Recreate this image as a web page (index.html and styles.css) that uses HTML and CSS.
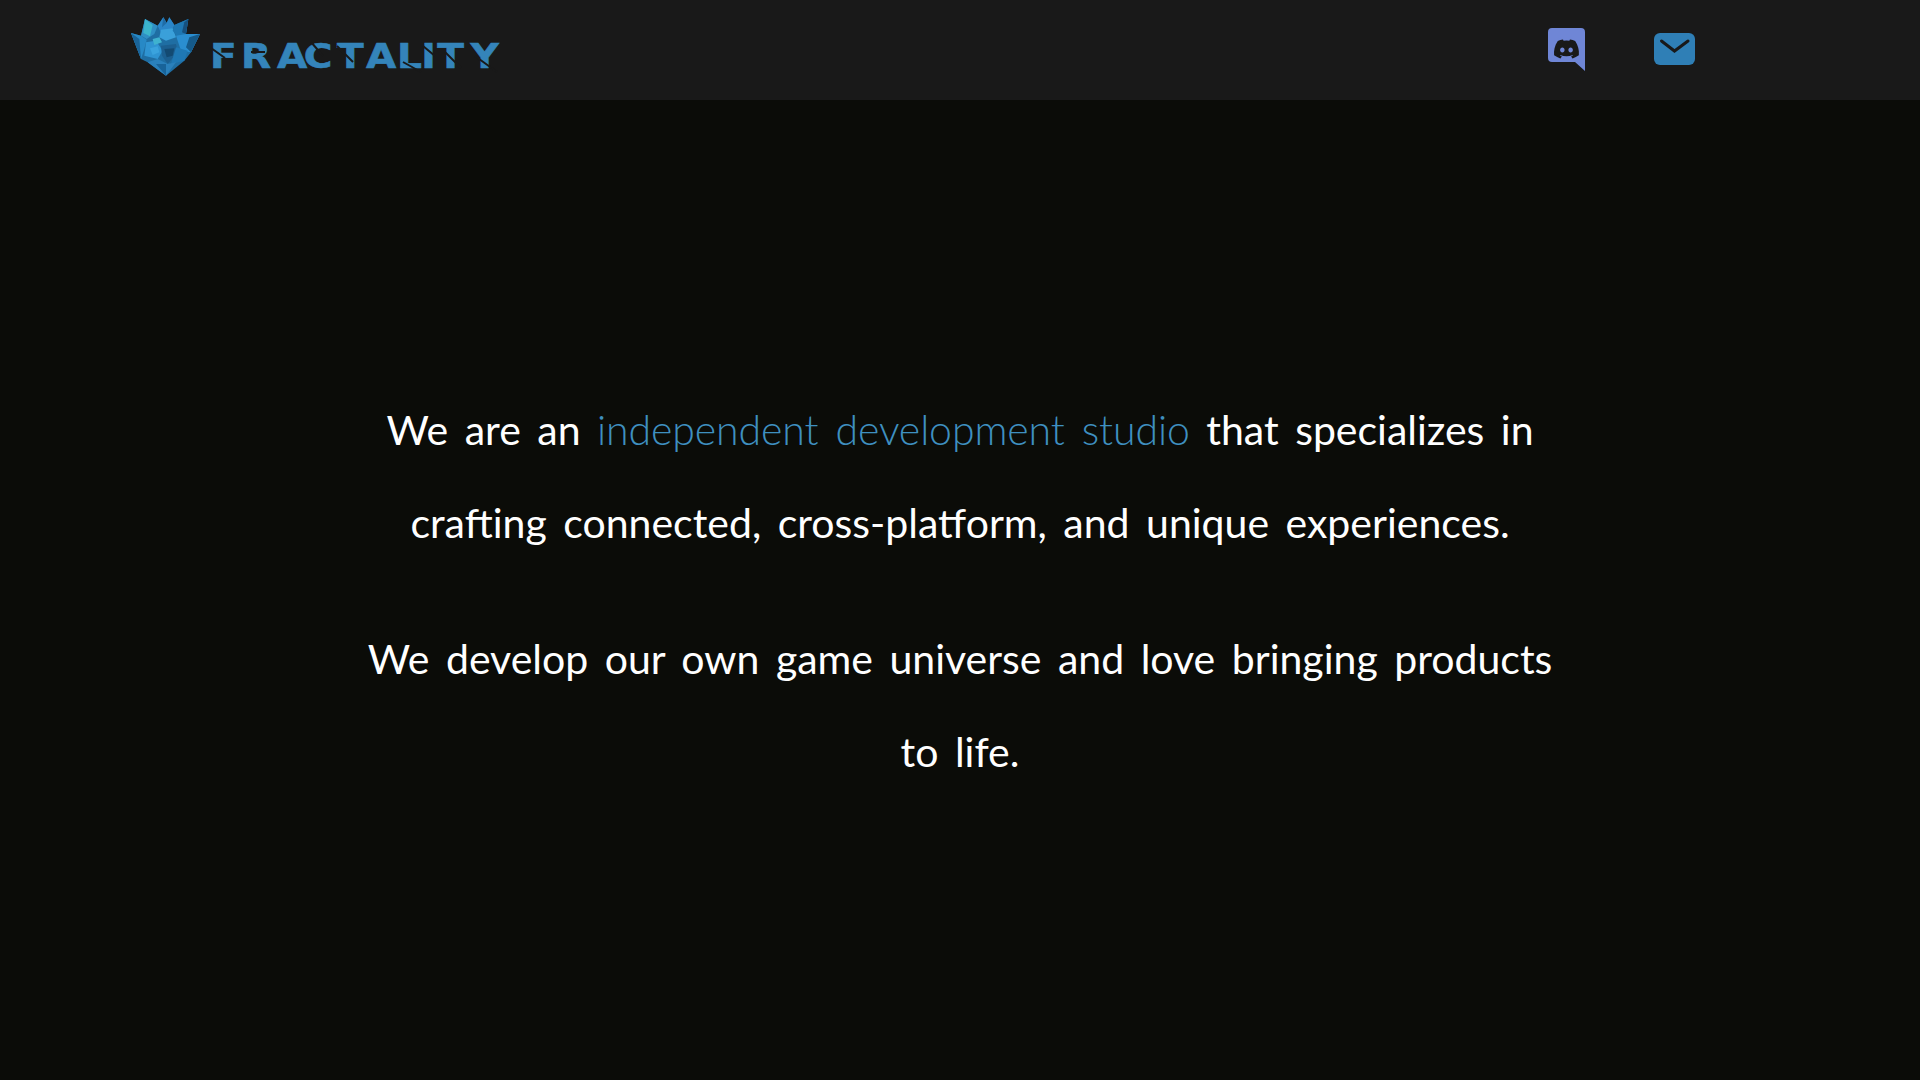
FILE: index.html
```html
<!DOCTYPE html>
<html lang="en">
<head>
<meta charset="utf-8">
<title>Fractality</title>
<link rel="stylesheet" href="styles.css">
</head>
<body>
<header class="topbar">
  <a class="brand" href="#">
    <svg class="crest" viewBox="0 0 255 210" aria-hidden="true">
      <polygon fill="#1f6ea3" points="15,72 45,80 57,30 95,50 112,25 122,42 130,25 145,48 187,30 180,75 222,75 195,130 175,155 120,200 65,160 45,150"/>
      <polygon fill="#2f8fc4" points="57,30 95,50 85,75 62,90 45,80"/>
      <polygon fill="#3bb4cc" points="57,30 80,48 72,82 52,72"/>
      <polygon fill="#2b86c8" points="95,50 112,25 122,42 130,25 145,48 135,68 105,72"/>
      <polygon fill="#1f6ca6" points="112,25 122,42 108,55"/>
      <polygon fill="#3aa0da" points="105,62 140,58 150,85 120,95 100,85"/>
      <polygon fill="#1e77b2" points="145,48 187,30 180,75 160,90 140,65"/>
      <polygon fill="#16507e" points="175,40 187,30 180,75 168,70"/>
      <polygon fill="#2a8ed0" points="150,80 180,75 222,75 195,130 165,125"/>
      <polygon fill="#155a8a" points="190,85 222,75 195,130 180,115"/>
      <polygon fill="#2789c6" points="15,72 45,80 62,92 55,120 45,150"/>
      <polygon fill="#1a6499" points="15,72 40,90 45,150"/>
      <polygon fill="#2f94d2" points="60,100 90,95 110,125 95,150 55,140"/>
      <polygon fill="#3aa3de" points="72,118 95,112 100,130 80,138"/>
      <polygon fill="#1c5f90" points="105,110 150,105 155,130 125,165 108,140"/>
      <polygon fill="#1f78b4" points="150,115 185,125 175,155 135,165"/>
      <polygon fill="#134a72" points="115,120 145,118 140,140 122,145"/>
      <polygon fill="#2a80bb" points="65,160 95,150 125,165 150,160 120,200"/>
      <polygon fill="#186399" points="90,165 120,165 120,200"/>
      <polygon fill="#3fb2cf" points="80,90 100,85 108,100 85,108"/>
    </svg>
    <svg class="wordmark" viewBox="0 0 290 30" role="img" aria-label="FRACTALITY">
      <text class="wordmark-text" transform="scale(1.15 1)" y="26" x="-2.6 24.3 55.7 79 107.8 133 160 181 195 224">FRACTALITY</text>
      <g class="cuts">
        <line x1="-2" y1="6" x2="12" y2="16"/>
        <line x1="38" y1="10" x2="52" y2="10"/>
        <line x1="98" y1="0" x2="110" y2="14"/>
        <line x1="124" y1="4" x2="140" y2="20"/>
        <line x1="190" y1="20" x2="208" y2="30"/>
        <line x1="210" y1="4" x2="222" y2="14"/>
        <line x1="232" y1="10" x2="248" y2="26"/>
        <line x1="262" y1="14" x2="284" y2="30"/>
      </g>
    </svg>
  </a>
  <nav class="socials">
    <a class="social" href="#" aria-label="Discord">
      <svg class="icon-discord" viewBox="0 0 38 44" aria-hidden="true">
        <path class="discord-bubble" d="M4 0H33a4 4 0 0 1 4 4V43L27 34H4a4 4 0 0 1-4-4V4a4 4 0 0 1 4-4z"/>
        <g transform="translate(6 8.5) scale(1.04)">
          <path class="discord-face" d="M20.317 4.37a19.791 19.791 0 0 0-4.885-1.515.074.074 0 0 0-.079.037c-.21.375-.444.864-.608 1.25a18.27 18.27 0 0 0-5.487 0 12.64 12.64 0 0 0-.617-1.25.077.077 0 0 0-.079-.037A19.736 19.736 0 0 0 3.677 4.37a.07.07 0 0 0-.032.027C.533 9.046-.32 13.58.099 18.057a.082.082 0 0 0 .031.057 19.9 19.9 0 0 0 5.993 3.03.078.078 0 0 0 .084-.028 14.09 14.09 0 0 0 1.226-1.994.076.076 0 0 0-.041-.106 13.107 13.107 0 0 1-1.872-.892.077.077 0 0 1-.008-.128 10.2 10.2 0 0 0 .372-.292.074.074 0 0 1 .077-.01c3.928 1.793 8.18 1.793 12.062 0a.074.074 0 0 1 .078.01c.12.098.246.198.373.292a.077.077 0 0 1-.006.127 12.299 12.299 0 0 1-1.873.892.077.077 0 0 0-.041.107c.36.698.772 1.362 1.225 1.993a.076.076 0 0 0 .084.028 19.839 19.839 0 0 0 6.002-3.03.077.077 0 0 0 .032-.054c.5-5.177-.838-9.674-3.549-13.66a.061.061 0 0 0-.031-.03zM8.02 15.33c-1.183 0-2.157-1.085-2.157-2.419 0-1.333.956-2.419 2.157-2.419 1.21 0 2.176 1.096 2.157 2.42 0 1.333-.956 2.418-2.157 2.418zm7.975 0c-1.183 0-2.157-1.085-2.157-2.419 0-1.333.955-2.419 2.157-2.419 1.21 0 2.176 1.096 2.157 2.42 0 1.333-.946 2.418-2.157 2.418z"/>
        </g>
      </svg>
    </a>
    <a class="social" href="#" aria-label="Email">
      <svg class="icon-mail" viewBox="0 0 41 32" aria-hidden="true">
        <rect class="mail-body" width="41" height="32" rx="6"/>
        <polyline class="mail-flap" points="7.5,8 20.5,18 34,8"/>
      </svg>
    </a>
  </nav>
</header>
<main class="intro">
  <p class="lead">We are an <span class="accent">independent development studio</span> that specializes in crafting connected, cross-platform, and unique experiences.</p>
  <p class="lead">We develop our own game universe and love bringing products to life.</p>
</main>
</body>
</html>
```

FILE: styles.css
```css
* { box-sizing: border-box; }
html, body { margin: 0; height: 100%; }
body {
  background: #0b0c08;
  color: #fff;
  font-family: "Lato", "Noto Sans", sans-serif;
  overflow: hidden;
}
.topbar {
  height: 100px;
  background: #191919;
  display: flex;
  align-items: center;
  justify-content: space-between;
  padding: 0 225px 0 130px;
}
.brand {
  display: flex;
  align-items: flex-start;
  gap: 2px;
  height: 100px;
  padding-top: 9px;
  text-decoration: none;
}
.crest { width: 85px; height: 70px; margin-left: -4px; display: block; }
.wordmark { width: 290px; height: 30px; margin-top: 33px; display: block; overflow: visible; }
.wordmark-text {
  font-family: "DejaVu Sans", "Liberation Sans", sans-serif;
  font-weight: 700;
  font-size: 34px;
  fill: #3484ba;
  stroke: #3484ba;
  stroke-width: 0.6px;
}
.cuts line { stroke: #191919; stroke-width: 2; }
.socials { display: flex; align-items: flex-start; gap: 68px; height: 100px; padding-top: 28px; }
.social { display: block; }
.icon-discord { width: 38px; height: 44px; display: block; }
.discord-bubble { fill: #6f86d6; }
.discord-face { fill: #191919; }
.icon-mail { width: 41px; height: 32px; display: block; margin-top: 5px; }
.mail-body { fill: #2f7fb6; }
.mail-flap { fill: none; stroke: #191919; stroke-width: 3; stroke-linecap: round; stroke-linejoin: miter; }
.intro {
  width: 1200px;
  margin: 0 auto;
  padding-top: 283px;
  text-align: center;
}
.lead {
  margin: 0 0 43px;
  font-size: 41px;
  line-height: 93px;
  font-weight: 400;
  letter-spacing: 0;
  word-spacing: 6px;
}
.accent { color: #3f90c0; font-weight: 300; letter-spacing: -0.1px; }
```
